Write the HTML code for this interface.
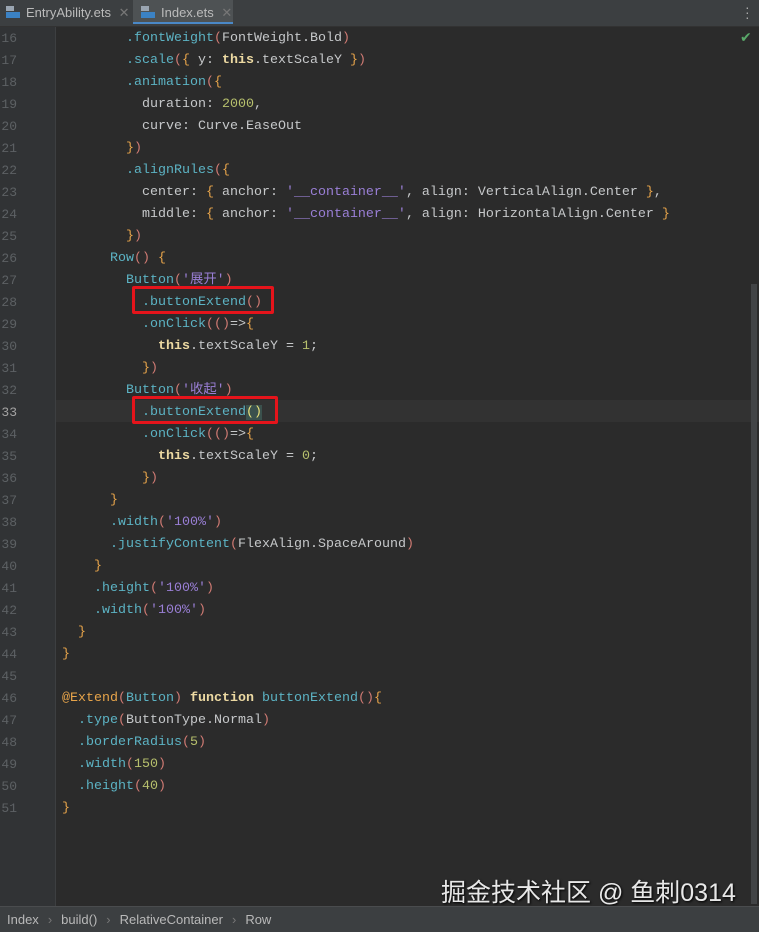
<!DOCTYPE html>
<html><head><meta charset="utf-8"><style>
body{margin:0;width:759px;height:931px;background:#2b2b2b;overflow:hidden;position:relative;font-family:"Liberation Mono",monospace}
.tabs{position:absolute;left:0;top:0;width:759px;height:26px;background:#3c3f41;border-bottom:1px solid #323232;font-family:"Liberation Sans",sans-serif;font-size:13px;color:#bbb}
.tab{position:absolute;top:0;height:26px;line-height:26px}
.ic{display:inline-block;width:14px;height:12px;vertical-align:-1px;margin-right:6px;position:relative}
.ic:before{content:"";position:absolute;left:0;top:0;width:8px;height:5px;background:#9aa5b1}
.ic:after{content:"";position:absolute;left:0;bottom:0;width:14px;height:6px;background:#3b82c4}
.gut{position:absolute;left:0;top:27px;width:55px;height:879px;background:#313335;border-right:1px solid #3d3f41}
.ln{position:absolute;left:0;width:17px;text-align:right;color:#5d6164;font-size:13px;height:22px;line-height:22px}
.code{position:absolute;left:62px;top:28px;font-size:13.33px;color:#c6c8ca}
.l{height:22px;line-height:22px;white-space:pre}
.m{color:#5cb3c4}.p{color:#cf7a73}.b{color:#e7a44a}.s{color:#9a7fd6}.n{color:#b7c06d}.k{color:#ecd9a2;font-weight:bold}.a{color:#e7a44a}
.cur{position:absolute;left:56px;top:400px;width:703px;height:22px;background:#323232}
.box{position:absolute;border:3px solid #e5141b;border-radius:2px}
.sb{position:absolute;left:0;top:906px;width:759px;height:25px;background:#3c3f41;border-top:1px solid #4a4c4e;font-family:"Liberation Sans",sans-serif;font-size:13px;color:#b9b9b9;line-height:25px}
.wm{position:absolute;left:441px;top:873px;font-family:"Liberation Sans","Noto Sans CJK SC",sans-serif;font-size:25px;color:#e8e8e8;text-shadow:1px 1px 2px #000}
</style></head><body>
<div class="tabs">
<div class="tab" style="left:6px"><span class="ic"></span>EntryAbility.ets <span style="color:#777;margin-left:4px">✕</span></div>
<div class="tab" style="left:133px;width:100px;background:#4e5254;border-bottom:2px solid #4a88c7;height:24px;line-height:26px;padding-left:8px;box-sizing:border-box"><span class="ic"></span>Index.ets <span style="color:#777;margin-left:4px">✕</span></div>
<div style="position:absolute;left:745px;top:5px;width:3px;height:16px;color:#aaa;font-size:14px;line-height:5px">·<br>·<br>·</div>
</div>
<div class="gut"></div>
<div class="cur"></div>
<div style="position:absolute;left:740px;top:30px;color:#59a869;font-size:14px;font-family:'DejaVu Sans',sans-serif">✔</div>
<div style="position:absolute;left:751px;top:284px;width:6px;height:620px;background:#424446"></div>
<div id="nums"></div>
<div class="code"><div class="l">        <span class="m">.fontWeight</span><span class="p">(</span>FontWeight.Bold<span class="p">)</span></div><div class="l">        <span class="m">.scale</span><span class="p">(</span><span class="b">{</span> y: <span class="k">this</span>.textScaleY <span class="b">}</span><span class="p">)</span></div><div class="l">        <span class="m">.animation</span><span class="p">(</span><span class="b">{</span></div><div class="l">          duration: <span class="n">2000</span>,</div><div class="l">          curve: Curve.EaseOut</div><div class="l">        <span class="b">}</span><span class="p">)</span></div><div class="l">        <span class="m">.alignRules</span><span class="p">(</span><span class="b">{</span></div><div class="l">          center: <span class="b">{</span> anchor: <span class="s">'__container__'</span>, align: VerticalAlign.Center <span class="b">}</span>,</div><div class="l">          middle: <span class="b">{</span> anchor: <span class="s">'__container__'</span>, align: HorizontalAlign.Center <span class="b">}</span></div><div class="l">        <span class="b">}</span><span class="p">)</span></div><div class="l">      <span class="m">Row</span><span class="p">()</span> <span class="b">{</span></div><div class="l">        <span class="m">Button</span><span class="p">(</span><span class="s">'展开'</span><span class="p">)</span></div><div class="l">          <span class="m">.buttonExtend</span><span class="p">()</span></div><div class="l">          <span class="m">.onClick</span><span class="p">(()</span>=&gt;<span class="b">{</span></div><div class="l">            <span class="k">this</span>.textScaleY = <span class="n">1</span>;</div><div class="l">          <span class="b">}</span><span class="p">)</span></div><div class="l">        <span class="m">Button</span><span class="p">(</span><span class="s">'收起'</span><span class="p">)</span></div><div class="l">          <span class="m">.buttonExtend</span><span style="color:#e8e07a;background:#3b514d">()</span></div><div class="l">          <span class="m">.onClick</span><span class="p">(()</span>=&gt;<span class="b">{</span></div><div class="l">            <span class="k">this</span>.textScaleY = <span class="n">0</span>;</div><div class="l">          <span class="b">}</span><span class="p">)</span></div><div class="l">      <span class="b">}</span></div><div class="l">      <span class="m">.width</span><span class="p">(</span><span class="s">'100%'</span><span class="p">)</span></div><div class="l">      <span class="m">.justifyContent</span><span class="p">(</span>FlexAlign.SpaceAround<span class="p">)</span></div><div class="l">    <span class="b">}</span></div><div class="l">    <span class="m">.height</span><span class="p">(</span><span class="s">'100%'</span><span class="p">)</span></div><div class="l">    <span class="m">.width</span><span class="p">(</span><span class="s">'100%'</span><span class="p">)</span></div><div class="l">  <span class="b">}</span></div><div class="l"><span class="b">}</span></div><div class="l"> </div><div class="l"><span class="a">@Extend</span><span class="p">(</span><span class="m">Button</span><span class="p">)</span> <span class="k">function</span> <span class="m">buttonExtend</span><span class="p">()</span><span class="b">{</span></div><div class="l">  <span class="m">.type</span><span class="p">(</span>ButtonType.Normal<span class="p">)</span></div><div class="l">  <span class="m">.borderRadius</span><span class="p">(</span><span class="n">5</span><span class="p">)</span></div><div class="l">  <span class="m">.width</span><span class="p">(</span><span class="n">150</span><span class="p">)</span></div><div class="l">  <span class="m">.height</span><span class="p">(</span><span class="n">40</span><span class="p">)</span></div><div class="l"><span class="b">}</span></div></div>
<div class="box" style="left:132px;top:286px;width:136px;height:22px"></div>
<div class="box" style="left:132px;top:396px;width:140px;height:22px"></div>
<div class="wm">掘金技术社区 @ 鱼刺0314</div>
<div class="sb"><span style="margin-left:7px">Index</span><span style="color:#777;margin:0 9px">›</span>build()<span style="color:#777;margin:0 9px">›</span>RelativeContainer<span style="color:#777;margin:0 9px">›</span>Row</div>
<script>
var h='';for(var i=16;i<=51;i++){h+='<div class="ln" style="top:'+(28+(i-16)*22)+'px'+(i==33?';color:#a4a3a3':'')+'">'+i+'</div>';}
document.getElementById('nums').innerHTML=h;
</script>
</body></html>
